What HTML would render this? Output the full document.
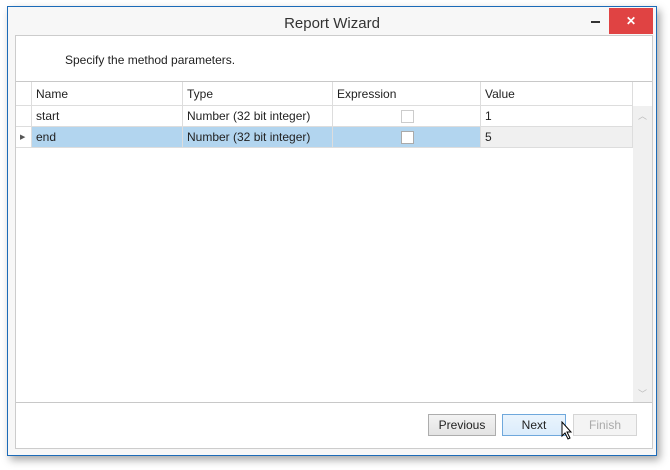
<!DOCTYPE html>
<html><head><style>
body{margin:0;width:670px;height:470px;background:#fff;font-family:"Liberation Sans",sans-serif;font-size:12px;color:#222;position:relative;overflow:hidden}
.win{position:absolute;left:7px;top:6px;width:648px;height:448px;border:1px solid #1c6bb8;background:#f7f7f7;box-shadow:3px 4px 8px rgba(0,0,0,.35)}
.title{position:absolute;left:0;right:0;top:8px;text-align:center;font-size:15px;color:#333}
.close{position:absolute;left:601px;top:1px;width:44px;height:26px;background:#e04343;color:#fff;text-align:center;font-size:12px;line-height:26px;font-weight:bold}
.min{position:absolute;left:583px;top:14px;width:9px;height:2px;background:#333}
.panel{position:absolute;left:7px;top:28px;width:636px;height:412px;border:1px solid #ccc;background:#fff}
.sub{position:absolute;left:49px;top:17px;font-size:12px}
.grid{position:absolute;left:0;top:45px;width:636px;height:320px;border-top:1px solid #c8c8c8;border-bottom:1px solid #c8c8c8}
.c{position:absolute;height:21px;line-height:21px;padding-left:4px;box-sizing:border-box;border-right:1px solid #ddd;border-bottom:1px solid #ddd}
.sel{background:#b2d5ef}
.cb{position:absolute;width:11px;height:11px;border:1px solid #aaa;background:#fff;top:4px}
.btn{position:absolute;top:407px;height:22px;width:68px;box-sizing:border-box;border:1px solid #adadad;background:linear-gradient(#f3f3f3,#e3e3e3);text-align:center;line-height:20px;font-size:12px}
</style></head><body>
<div class="win">
<div class="title">Report Wizard</div>
<div class="min"></div>
<div class="close">✕</div>
<div class="panel">
<div class="sub">Specify the method parameters.</div>
<div class="grid">
<div class="c" style="left:0;top:0;width:16px;height:24px"></div>
<div class="c" style="left:16px;top:0;width:151px;height:24px;line-height:24px">Name</div>
<div class="c" style="left:167px;top:0;width:150px;height:24px;line-height:24px">Type</div>
<div class="c" style="left:317px;top:0;width:148px;height:24px;line-height:24px">Expression</div>
<div class="c" style="left:465px;top:0;width:152px;height:24px;line-height:24px">Value</div>
<div class="c" style="left:0;top:24px;width:16px"></div>
<div class="c" style="left:16px;top:24px;width:151px">start</div>
<div class="c" style="left:167px;top:24px;width:150px">Number (32 bit integer)</div>
<div class="c" style="left:317px;top:24px;width:148px"><div class="cb" style="left:68px;border-color:#ccc"></div></div>
<div class="c" style="left:465px;top:24px;width:152px">1</div>
<div class="c" style="left:0;top:45px;width:16px;font-size:7px;color:#555">▶</div>
<div class="c sel" style="left:16px;top:45px;width:151px">end</div>
<div class="c sel" style="left:167px;top:45px;width:150px">Number (32 bit integer)</div>
<div class="c sel" style="left:317px;top:45px;width:148px"><div class="cb" style="left:68px"></div></div>
<div class="c" style="left:465px;top:45px;width:152px;background:#f0f0f0">5</div>
<div style="position:absolute;left:617px;top:24px;width:19px;height:296px;background:#f0f0f0;color:#bbb;font-size:9px;text-align:center"><div style="margin-top:3px">︿</div><div style="position:absolute;bottom:2px;width:19px">﹀</div></div>
</div>
<div class="btn" style="left:412px;top:378px">Previous</div>
<div class="btn" style="left:486px;top:378px;width:64px;border-color:#6fa8dc;background:linear-gradient(#eaf4fd,#dbecfb)">Next</div>
<div class="btn" style="left:557px;top:378px;width:64px;color:#aaa;border-color:#d5d5d5;background:#f4f4f4">Finish</div>
<svg style="position:absolute;left:545px;top:385px" width="12" height="20" viewBox="0 0 12 20"><path d="M1 1 L1 15 L4 12 L7 18 L9 17 L6 11 L10 11 Z" fill="#fff" stroke="#000" stroke-width="1"/></svg>
</div>
</div>
</body></html>
